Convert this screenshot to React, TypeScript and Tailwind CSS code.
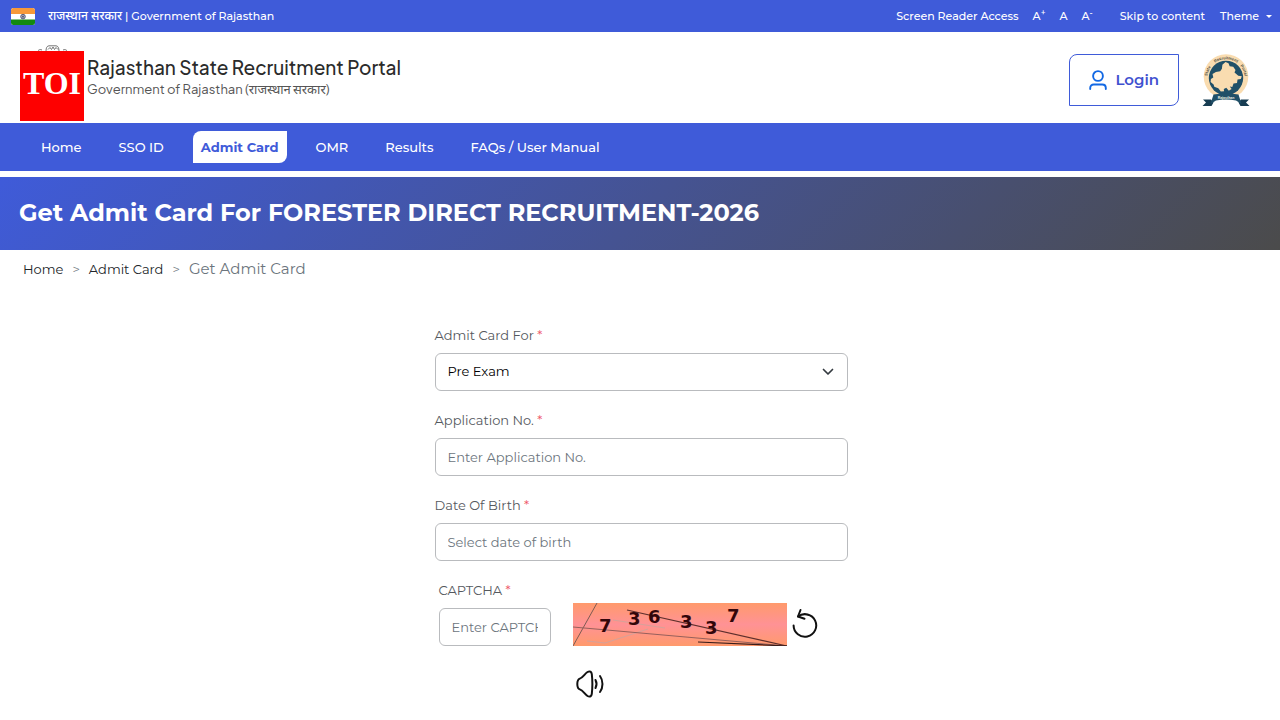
import { useState, type ReactNode } from "react";

const navItems = ["Home", "SSO ID", "Admit Card", "OMR", "Results", "FAQs / User Manual"];

const wheelSpokes = [0, 30, 60, 90, 120, 150];

function IndiaFlag() {
  return (
    <svg viewBox="0 0 24 17" className="h-[17px] w-6 shrink-0" role="img" aria-label="Flag of India">
      <defs>
        <clipPath id="flag-shape">
          <rect width="24" height="17" rx="2.5" />
        </clipPath>
      </defs>
      <g clipPath="url(#flag-shape)">
        <rect width="24" height="17" fill="#fff" />
        <rect width="24" height="6" fill="#f7993a" />
        <rect y="11.5" width="24" height="5.5" fill="#138a10" />
        <circle cx="12" cy="8.6" r="2.3" fill="none" stroke="#33395f" strokeWidth="0.8" />
        {wheelSpokes.map((angle) => (
          <path key={angle} d="M9.8 8.6h4.4" stroke="#33395f" strokeWidth="0.35" transform={`rotate(${angle} 12 8.6)`} />
        ))}
      </g>
    </svg>
  );
}

function EmblemCrest() {
  return (
    <svg viewBox="0 0 64 6" className="h-[6px] w-16" fill="none" stroke="#666" aria-hidden="true">
      <path d="M26 6c0-3 1-5.200 3-5.200h7c2 0 3 2.200 3 5.200M28 4.500l2-2 1.500 2 1.500-2.500 1.500 2.500 1.500-2 2 2" strokeWidth="0.9" />
      <path d="M18 5.800c1-1.300 2.500-1.500 4-.8M43 5c1.500-.7 3-.5 4 .8" strokeWidth="0.9" />
    </svg>
  );
}

function PortalSeal() {
  return (
    <svg viewBox="0 0 48 54" className="h-[54px] w-12 shrink-0" role="img" aria-label="State Recruitment Portal Rajasthan">
      <defs>
        <path id="seal-arc" d="M6 30A18.700 18.700 0 1 1 42 30" />
      </defs>
      <circle cx="24" cy="23.500" r="22.300" fill="#f9dcb0" />
      <circle cx="24" cy="25" r="17.200" fill="#205068" />
      <path
        d="M23.500 9l3 1.300 1.200 3 3.500.5 2.300 3.200-1 2.500 3.800 3.200 3.500.6-1 2.600-3.300.6-.5 3.500-3.500.4-1.200 3.500-2.500-.5 1.800 2.700-2.800 1.600-2.500-3-2.500 1.200.3 2.300-3.300.4-2.500-3.400-4-1.400-.7-2.400-3-2.500.3-3 2.400-1.400-.8-3.400 3.400-2.100 4.300-.7 1.700-2.600.5-4z"
        fill="#f9dcb0"
      />
      <g fontSize="4" fontWeight="700" fill="#4a4a42" fontFamily="Liberation Sans, sans-serif">
        <text>
          <textPath href="#seal-arc" startOffset="7">State</textPath>
        </text>
        <text textAnchor="middle">
          <textPath href="#seal-arc" startOffset="50%">Recruitment</textPath>
        </text>
        <text textAnchor="end">
          <textPath href="#seal-arc" startOffset="90%">Portal</textPath>
        </text>
      </g>
      <path d="M9 46.500H1l3 3-3.500 3.500H9.500l2-3.500zM39 46.500h8l-3 3 3.500 3.500h-9l-2-3.500z" fill="#173d52" />
      <path d="M8.500 51l3-9.500c8-1.500 17-1.500 25 0l3 9.500-5.500-3.500c-6.500-1.300-13.500-1.300-20 0z" fill="#205068" />
      <text x="24" y="45.500" fontSize="3.500" fontWeight="700" textAnchor="middle" fill="#f4efe0" fontFamily="Liberation Sans, sans-serif">
        Rajasthan
      </text>
    </svg>
  );
}

function UserIcon() {
  return (
    <svg viewBox="0 0 18 20" className="h-5 w-[18px]" fill="none" stroke="#1268e4" strokeWidth="1.900" strokeLinecap="round" aria-hidden="true">
      <circle cx="9" cy="6" r="4.900" />
      <path d="M1.200 19v-1c0-2 1.500-3.500 3.500-3.500h8.600c2 0 3.500 1.500 3.500 3.500v1" />
    </svg>
  );
}

function RefreshIcon() {
  return (
    <svg viewBox="0 0 26 30" className="h-[30px] w-[26px]" fill="none" stroke="#111" strokeWidth="2" strokeLinecap="round" strokeLinejoin="round" aria-hidden="true">
      <path d="M1.600 17.500A11.300 11.300 0 1 0 6 8.500C9 6.300 13 5.600 17 7" />
      <path d="M8.500 2L6 8.500l6.500 2.200" />
    </svg>
  );
}

function SpeakerIcon() {
  return (
    <svg viewBox="0 0 28 28" className="size-7" fill="none" stroke="#111" strokeWidth="2" strokeLinecap="round" strokeLinejoin="round" aria-hidden="true">
      <path d="M1.300 14c0-2.800.5-4.700 2.500-5.400C7 7.500 8.500 4 11.500 2c2.500-1.500 4 0 4.300 2.200.7 6 .7 13.600 0 19.600-.3 2.200-1.800 3.700-4.300 2.200-3-2-4.500-5.500-7.700-6.600-2-.7-2.500-2.600-2.500-5.400z" />
      <path d="M19.500 10c1.300 2.500 1.300 5.500 0 8M24 6c3.300 4.500 3.300 11.500 0 16" />
    </svg>
  );
}

function CaptchaPicture() {
  return (
    <svg viewBox="0 0 214 43" className="h-[43px] w-[214px] shrink-0" role="img" aria-label="CAPTCHA digits">
      <defs>
        <linearGradient id="captcha-fill" x1="0" y1="0" x2="0" y2="1">
          <stop offset="0" stopColor="#ff9a6c" />
          <stop offset="0.5" stopColor="#ff9295" />
          <stop offset="1" stopColor="#ff9a6c" />
        </linearGradient>
      </defs>
      <rect width="214" height="43" fill="url(#captcha-fill)" />
      <path d="M40 17l52 8M14 38l18 2L75 26" fill="none" stroke="#d5a29a" strokeWidth="1" />
      <path d="M0 43L24 0" stroke="#7e5a52" strokeWidth="1" />
      <path d="M0 24l214 19" stroke="#96605c" strokeWidth="1" />
      <path d="M54 7l160 36" stroke="#5e2f2c" strokeWidth="1.200" />
      <path d="M125 39l89 4" stroke="#3a1c1a" strokeWidth="1.200" />
      <g fill="#33060a" fontFamily="DejaVu Sans, sans-serif" fontWeight="700" fontSize="18">
        <text x="26" y="29">7</text>
        <text x="55" y="22">3</text>
        <text x="75" y="20">6</text>
        <text x="107" y="25">3</text>
        <text x="132" y="31">3</text>
        <text x="154" y="19">7</text>
      </g>
    </svg>
  );
}

function FieldLabel({ htmlFor, children }: { htmlFor: string; children: ReactNode }) {
  return (
    <label htmlFor={htmlFor} className="text-[13px] leading-5 text-[#55595e]">
      {children} <span className="text-[#ee5566]">*</span>
    </label>
  );
}

const inputClass =
  "h-[38px] w-full rounded-md border border-[#b9bbbe] bg-white px-3 text-[13px] text-black placeholder:text-[#6c757d] outline-none focus:border-[#3f5bd9]";

function TopBar() {
  return (
    <div className="flex h-8 items-center justify-between bg-[#3f5bd9] pr-2 pl-[11px] text-[11px] font-medium text-white">
      <div className="flex items-center gap-[13px]">
        <IndiaFlag />
        <span>
          <span lang="hi" className="text-xs">राजस्थान सरकार</span> | Government of Rajasthan
        </span>
      </div>
      <div className="flex items-center">
        <a href="#reader">Screen Reader Access</a>
        <div className="mr-[27px] ml-[14px] flex gap-[14px]">
          <button type="button" aria-label="Increase text size">A<sup>+</sup></button>
          <button type="button" aria-label="Normal text size">A</button>
          <button type="button" aria-label="Decrease text size">A<sup>-</sup></button>
        </div>
        <a href="#content">Skip to content</a>
        <button type="button" className="ml-[15px] flex items-center gap-[7px]">
          Theme
          <svg viewBox="0 0 6 3" className="h-[3px] w-[6px]" fill="currentColor" aria-hidden="true">
            <path d="M0 0h6L3 3z" />
          </svg>
        </button>
      </div>
    </div>
  );
}

function Header() {
  return (
    <header className="flex items-start justify-between pt-[13px] pr-[30px] pb-[2px] pl-5">
      <div className="flex gap-[3px]">
        <div>
          <EmblemCrest />
          <div className="flex h-[70px] w-16 items-center justify-center bg-[#fe0000] pb-[6px] font-['Liberation_Serif',serif] text-[32px] font-bold text-white">
            TOI
          </div>
        </div>
        <div className="pt-[9px] font-['Plus_Jakarta_Sans','Inter','Noto_Sans_Devanagari',sans-serif]">
          <h1 className="text-[19px] leading-[26px] font-medium text-[#2b2b2b]">Rajasthan State Recruitment Portal</h1>
          <p className="text-[13px] leading-[18px] text-[#555]">Government of Rajasthan (राजस्थान सरकार)</p>
        </div>
      </div>
      <div className="flex items-center gap-[23px] pt-2">
        <a
          href="#login"
          className="flex h-[52px] items-center gap-2 rounded-tl-lg rounded-br-lg border border-[#3f5bd9] px-[19px] text-[15px] font-semibold text-[#3f51cf]"
        >
          <UserIcon />
          Login
        </a>
        <PortalSeal />
      </div>
    </header>
  );
}

export default function App() {
  const [exam, setExam] = useState("Pre Exam");

  return (
    <div className="min-h-screen bg-white font-['Montserrat','Inter','Noto_Sans_Devanagari','Noto_Sans',sans-serif]">
      <TopBar />
      <Header />
      <nav className="flex h-12 items-center gap-[21px] bg-[#3f5bd9] px-[33px] text-[13px] leading-5 text-white">
        {navItems.map((item) => (
          <a
            key={item}
            href="#nav"
            className={
              item === "Admit Card"
                ? "rounded-tl-lg rounded-br-lg bg-white px-2 py-[6px] font-bold text-[#3f5bd9]"
                : "px-2 py-[6px] font-medium"
            }
          >
            {item}
          </a>
        ))}
      </nav>
      <div className="mt-[6px] bg-[linear-gradient(135deg,#3f5bd9,#4b4b4b)] px-[19px] pt-5 pb-[21px]">
        <h2 className="text-2xl font-bold text-white">Get Admit Card For FORESTER DIRECT RECRUITMENT-2026</h2>
      </div>
      <nav aria-label="Breadcrumb" className="flex items-center gap-[9px] px-[23px] pt-[7px] text-[13px] leading-6 text-[#212529]">
        <a href="#home">Home</a>
        <span className="text-[#6c757d]">&gt;</span>
        <a href="#admit">Admit Card</a>
        <span className="text-[#6c757d]">&gt;</span>
        <span className="text-[15px] text-[#6c757d]">Get Admit Card</span>
      </nav>

      <main id="content" className="pt-11 pr-4 pb-5 pl-[18px]">
        <form className="mx-auto flex max-w-[413px] flex-col gap-[19px]">
          <div className="flex flex-col gap-2">
            <FieldLabel htmlFor="exam">Admit Card For</FieldLabel>
            <div className="relative">
              <select id="exam" value={exam} onChange={(e) => setExam(e.target.value)} className={`${inputClass} appearance-none`}>
                <option>Pre Exam</option>
                <option>Main Exam</option>
              </select>
              <svg
                viewBox="0 0 12 8"
                className="pointer-events-none absolute top-[15px] right-[14px] h-2 w-3"
                fill="none"
                stroke="#343a40"
                strokeWidth="1.700"
                strokeLinecap="round"
                strokeLinejoin="round"
                aria-hidden="true"
              >
                <path d="M1.500 1.500L6 6l4.500-4.500" />
              </svg>
            </div>
          </div>
          <div className="flex flex-col gap-2">
            <FieldLabel htmlFor="application">Application No.</FieldLabel>
            <input id="application" type="text" placeholder="Enter Application No." className={inputClass} />
          </div>
          <div className="flex flex-col gap-2">
            <FieldLabel htmlFor="birth">Date Of Birth</FieldLabel>
            <input id="birth" type="text" placeholder="Select date of birth" className={inputClass} />
          </div>
          <div className="flex items-end pl-1">
            <div className="flex w-28 flex-col gap-2">
              <FieldLabel htmlFor="captcha">CAPTCHA</FieldLabel>
              <input id="captcha" type="text" placeholder="Enter CAPTCHA" className={inputClass} />
            </div>
            <div className="ml-[22px] flex items-end gap-[5px]">
              <CaptchaPicture />
              <button type="button" aria-label="Refresh CAPTCHA" className="mb-2">
                <RefreshIcon />
              </button>
            </div>
          </div>
          <button type="button" aria-label="Play CAPTCHA audio" className="mt-[5px] ml-[141px] self-start">
            <SpeakerIcon />
          </button>
        </form>
      </main>
    </div>
  );
}
